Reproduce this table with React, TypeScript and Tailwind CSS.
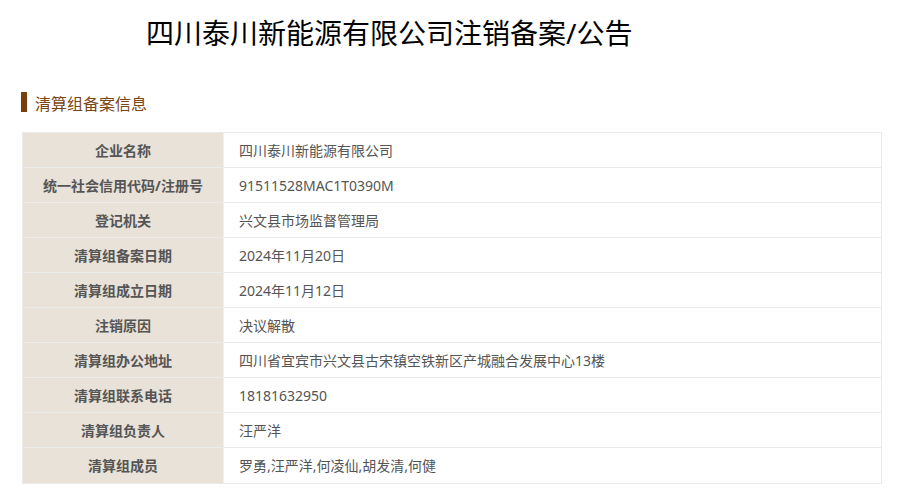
import React from "react";

const rows: [string, string][] = [
  ["企业名称", "四川泰川新能源有限公司"],
  ["统一社会信用代码/注册号", "91511528MAC1T0390M"],
  ["登记机关", "兴文县市场监督管理局"],
  ["清算组备案日期", "2024年11月20日"],
  ["清算组成立日期", "2024年11月12日"],
  ["注销原因", "决议解散"],
  ["清算组办公地址", "四川省宜宾市兴文县古宋镇空铁新区产城融合发展中心13楼"],
  ["清算组联系电话", "18181632950"],
  ["清算组负责人", "汪严洋"],
  ["清算组成员", "罗勇,汪严洋,何凌仙,胡发清,何健"],
];

export default function App() {
  return (
    <div
      className="w-[909px] h-[501px] bg-white overflow-hidden"
      style={{ fontFamily: '"Noto Sans", "Noto Sans CJK SC", sans-serif' }}
    >
      <h1 className="pt-[19px] pl-[146px] text-[28px] leading-[28px] font-normal text-black">
        四川泰川新能源有限公司注销备案/公告
      </h1>
      <div className="mt-[45px] ml-[21px] flex items-center h-[20px]">
        <div className="w-[6px] h-[20px] bg-[#7a3f0c]" />
        <div className="ml-[8px] text-[16px] leading-[16px] text-[#7b4614] mt-[4px]">
          清算组备案信息
        </div>
      </div>
      <div className="mt-[20px] ml-[22px] w-[860px] border border-[#ebebeb]">
        {rows.map(([k, v], i) => (
          <div
            key={k}
            className={`flex h-[35px] ${i < rows.length - 1 ? "border-b border-[#ebebeb]" : "h-[34px]"}`}
          >
            <div className="w-[200px] bg-[#e8e2d8] flex items-center justify-center text-[14px] font-bold text-[#555555]">
              {k}
            </div>
            <div className="flex-1 flex items-center pl-[15px] text-[14px] text-[#555555] border-l border-[#f0f0f0]">
              {v}
            </div>
          </div>
        ))}
      </div>
    </div>
  );
}
